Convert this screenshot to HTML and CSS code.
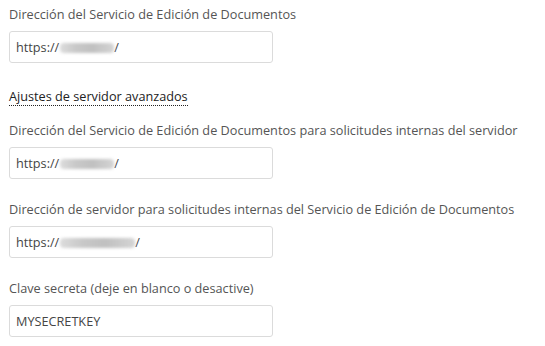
FILE: index.html
```html
<!DOCTYPE html>
<html lang="es">
<head>
<meta charset="utf-8">
<title>Ajustes</title>
<link rel="stylesheet" href="styles.css">
</head>
<body>
<div class="settings">
  <div class="field">
    <label class="label">Dirección del Servicio de Edición de Documentos</label>
    <div class="input"><span>https://</span><span class="blur blur-short"></span><span>/</span></div>
  </div>

  <div class="advanced"><span class="advanced-link">Ajustes de servidor avanzados</span></div>

  <div class="field field-first">
    <label class="label">Dirección del Servicio de Edición de Documentos para solicitudes internas del servidor</label>
    <div class="input"><span>https://</span><span class="blur blur-short"></span><span>/</span></div>
  </div>

  <div class="field">
    <label class="label">Dirección de servidor para solicitudes internas del Servicio de Edición de Documentos</label>
    <div class="input"><span>https://</span><span class="blur blur-long"></span><span>/</span></div>
  </div>

  <div class="field">
    <label class="label">Clave secreta (deje en blanco o desactive)</label>
    <div class="input"><span>MYSECRETKEY</span></div>
  </div>
</div>
</body>
</html>
```

FILE: styles.css
```css
html, body {
  margin: 0;
  padding: 0;
  background: #ffffff;
}

.settings {
  padding: 5px 0 0 9px;
  font-family: "Open Sans", "Noto Sans", "Liberation Sans", sans-serif;
  font-size: 12.7px;
  color: #555555;
}

.field {
  display: flex;
  flex-direction: column;
  align-items: flex-start;
}

.field + .field {
  margin-top: 21px;
}

.label {
  display: block;
  line-height: 18px;
}

.input {
  margin-top: 8px;
  box-sizing: border-box;
  width: 264px;
  height: 32px;
  padding: 0 6px;
  border: 1px solid #dbdbdb;
  border-radius: 3px;
  background: #ffffff;
  color: #454545;
  display: flex;
  align-items: center;
  line-height: 18px;
}

.blur {
  display: inline-block;
  height: 10px;
  margin-top: 1px;
  background: linear-gradient(90deg, #dcdcdc 0%, #c8c8c8 30%, #c0c0c0 60%, #d4d4d4 100%);
  filter: blur(1.5px);
  border-radius: 4px;
}

.blur-short {
  width: 54px;
  margin-left: 1px;
}

.blur-long {
  width: 75px;
  margin-left: 1px;
}

.advanced {
  margin-top: 24px;
  line-height: 18px;
  color: #222222;
}

.advanced-link {
  border-bottom: 1px dotted #222222;
}

.field-first {
  margin-top: 16px;
}
```
